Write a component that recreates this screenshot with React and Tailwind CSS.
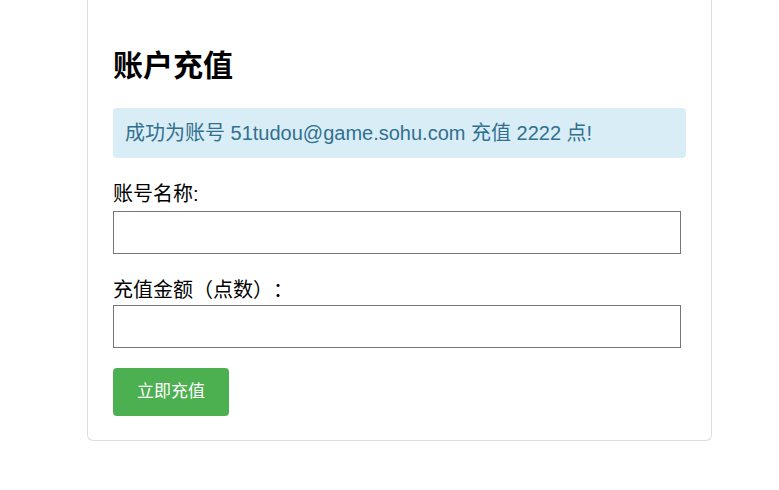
export default function App() {
  return (
    <div
      className="min-h-[490px] bg-white text-black"
      style={{ fontFamily: '"Liberation Sans", "Noto Sans CJK SC", sans-serif' }}
    >
      <div className="ml-[87px] w-[625px] rounded-b-[6px] border border-t-0 border-[#dddddd] px-[25px] pb-[24px] pt-[51px]">
        <h2 className="text-[30px] font-bold leading-[30px]">账户充值</h2>

        <div className="mt-[27px] flex h-[50px] items-center rounded-[4px] bg-[#d9edf7] px-[12px] text-[20px] text-[#31708f]">
          成功为账号 51tudou@game.sohu.com 充值 2222 点!
        </div>

        <label className="mt-[26px] block text-[20px] leading-[20px]">账号名称:</label>
        <input
          type="text"
          className="mt-[7px] block h-[43px] w-[568px] border border-[#767676] bg-white px-2 text-[16px]"
        />

        <label className="mt-[26px] block text-[20px] leading-[20px] [text-spacing-trim:space-all]">
          充值金额（点数）：
        </label>
        <input
          type="text"
          className="mt-[5px] block h-[43px] w-[568px] border border-[#767676] bg-white px-2 text-[16px]"
        />

        <button className="mt-[20px] h-[48px] w-[116px] rounded-[4px] bg-[#4caf50] text-[17px] text-white">
          立即充值
        </button>
      </div>
    </div>
  );
}
